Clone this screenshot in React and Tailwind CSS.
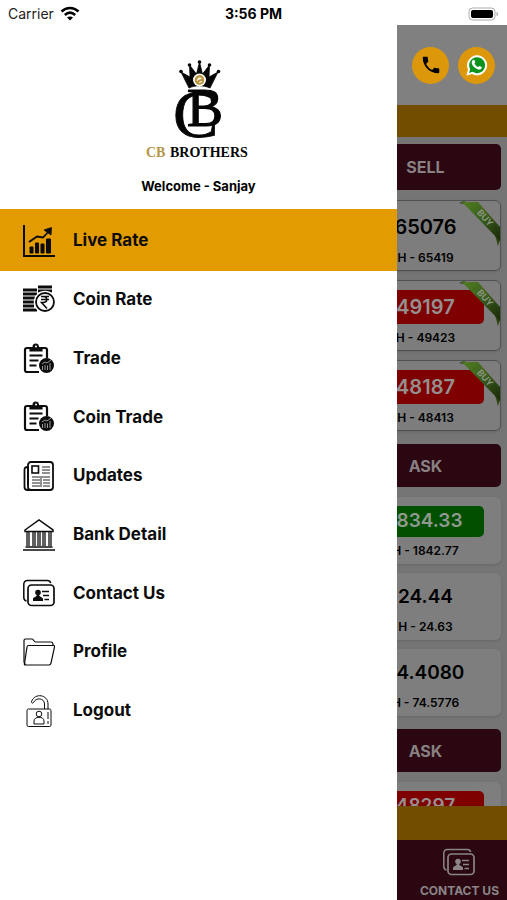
import React from "react";
import { MdPhone } from "react-icons/md";

function Icon({ children, className = "size-8" }) {
  return (
    <svg viewBox="0 0 32 32" className={className} fill="none" stroke="currentColor" strokeWidth="1.5" aria-hidden="true">
      {children}
    </svg>
  );
}

function LiveRateIcon() {
  return (
    <Icon>
      <path d="M1 0v31h31" strokeWidth="2" />
      <path d="M7 22h3v6H7zM12.500 18h3v10h-3zM18 19h3v9h-3zM23.500 14h4v14h-4z" fill="currentColor" strokeWidth="1" />
      <path d="M6 17l8-5.500 6 1L27 5" strokeWidth="1.800" />
      <path d="M21 5l7.500-2.500L28 10z" fill="currentColor" strokeWidth="0.800" />
    </Icon>
  );
}

function CoinRateIcon() {
  return (
    <Icon>
      <path d="M0 6h14M0 10h14M0 14h12M0 18h11M0 22h11M0 26h14M15 3h14M15 7h14" strokeWidth="3" />
      <circle cx="22" cy="18" r="10.500" fill="#fff" stroke="#fff" />
      <circle cx="22" cy="18" r="9" strokeWidth="1.800" />
      <path d="M18 12.500h8M18 15.500h8M18 12.500h2c5 0 5 6 0 6h-1.500l5.500 6" strokeWidth="1.600" />
    </Icon>
  );
}

function TradeIcon() {
  return (
    <Icon>
      <path d="M7 5H4a2 2 0 0 0-2 2v20a2 2 0 0 0 2 2h12M17 5h5a2 2 0 0 1 2 2v8" strokeWidth="2.200" />
      <path d="M7 8V4.500h3C10 0 15.500 0 15.500 4.500H19V8z" fill="currentColor" strokeWidth="1.200" />
      <circle cx="13" cy="3.500" r="1" fill="#fff" stroke="none" />
      <path d="M6.500 12.500h13M6.500 17.500h9M6.500 22.500h7" strokeWidth="1.800" />
      <circle cx="23.500" cy="22.500" r="7.500" fill="currentColor" stroke="none" />
      <path d="M19.500 27v-4M22 27v-5M24.500 27v-4.500M27 27v-7M19 21l3-2 2 1 4-3" stroke="#aaa" strokeWidth="0.900" />
    </Icon>
  );
}

function UpdatesIcon() {
  return (
    <Icon>
      <rect x="5" y="2" width="25" height="28" rx="3" strokeWidth="1.800" />
      <path d="M5 7c-3 0-3.500 1-3.500 3v17c0 2 1 3 3 3H9M5 7v18" strokeWidth="1.800" />
      <rect x="9" y="6" width="6.500" height="7" strokeWidth="1.600" />
      <path d="M19 7h8M19 10h8M19 13h8M9 17h18M9 20h8M9 23h8M9 26h8M20 20h7M20 23h7M20 26h7M18 18v9" strokeWidth="0.900" />
    </Icon>
  );
}

function BankIcon() {
  return (
    <Icon>
      <path d="M2 11L16 1l14 10v1.500H2z" strokeWidth="1.500" />
      <path d="M4 13v14M6 13v14M10 13v14M12 13v14M15 13v14M17 13v14M20 13v14M22 13v14M26 13v14M28 13v14" strokeWidth="1.300" />
      <path d="M2.500 28h27M0 31h32" strokeWidth="1.500" />
    </Icon>
  );
}

function ContactIcon() {
  return (
    <Icon>
      <path d="M3.500 24C1.500 23.500.8 22.500.8 20.500V7a3.500 3.500 0 0 1 3.500-3.500h20c2 0 3 1 3.400 2.700" />
      <rect x="5" y="8" width="26" height="20.500" rx="3.500" strokeWidth="1.700" />
      <circle cx="15" cy="15.500" r="2.800" fill="currentColor" stroke="none" />
      <path d="M10 24v-2c0-2 3-1.500 4-4h2c1 2.500 4 2 4 4v2z" fill="currentColor" stroke="none" />
      <path d="M19 14.500h7M20 18.500h6M21.500 22.500H26" />
    </Icon>
  );
}

function ProfileIcon() {
  return (
    <Icon>
      <path d="M2.500 29L1 26V4.500C1 3.500 1.500 3 2.500 3H9c2 0 1.500 3 3.500 3H28c1.500 0 2 1 2 3" strokeWidth="1.200" />
      <path d="M5.500 9.500h25c1 0 1.200.5 1 1.500l-3.500 16c-.3 1.300-1 2-2 2H2.500c-1 0-1.300-.5-1-1.500L4 11c.2-1 .7-1.500 1.500-1.500z" strokeWidth="1.200" />
    </Icon>
  );
}

function LogoutIcon() {
  return (
    <Icon>
      <g strokeWidth="1">
        <rect x="4" y="14" width="24" height="17.500" rx="1.500" />
        <path d="M21.500 14V9c0-6-8.500-7-11-1.500-1 1.500-2.500 0-2-1C12-2.500 25-.5 25 9v5" />
        <circle cx="16" cy="19" r="2.800" />
        <path d="M11 29v-3c0-5 10-5 10 0v3zM25 17v7M25 26v3" />
      </g>
    </Icon>
  );
}

function Logo() {
  return (
    <svg viewBox="0 0 110 102" className="h-[102px] w-[110px]" role="img" aria-label="CB Brothers">
      <g fill="#050505">
        <path d="M46 29L38 13l9 5-.5-12 7 9 3-12 3 12 7-9-.5 12 9-5-8 16c-7-3-15-3-21 0z" stroke="#050505" strokeWidth="0.800" />
        <circle cx="38" cy="12.500" r="1.800" />
        <circle cx="46.500" cy="6" r="1.800" />
        <circle cx="56.500" cy="3" r="1.800" />
        <circle cx="66.500" cy="6" r="1.800" />
        <circle cx="75.500" cy="12.500" r="1.800" />
      </g>
      <circle cx="56.500" cy="21" r="6.500" fill="#fff" />
      <g fill="none" stroke="#bb963d" strokeWidth="2">
        <circle cx="56.500" cy="21" r="3.800" />
        <path d="M53 21c2-5 5-5 7-1M54 24c2-4 4-3 6-3" />
      </g>
      <g fontFamily="'Liberation Serif', serif" fill="#050505">
        <text x="30" y="78" fontSize="68" stroke="#050505" strokeWidth="0.800">C</text>
        <text x="44" y="67" fontSize="54" stroke="#050505" strokeWidth="1.200">B</text>
        <text x="3" y="98" fontSize="14" fontWeight="700" fill="#b69545">CB</text>
        <text x="27" y="98" fontSize="14" fontWeight="700">BROTHERS</text>
      </g>
    </svg>
  );
}

function WhatsAppIcon() {
  return (
    <svg viewBox="0 0 24 24" className="size-[23px]" aria-hidden="true">
      <path d="M2 22l1.700-5.600A10 10 0 1 1 7.300 20.300z" fill="#fff" stroke="#fff" strokeWidth="1" />
      <path d="M4.200 19.800l1.200-4A8.300 8.300 0 1 1 8 18.600z" fill="#0c931c" />
      <path d="M8.200 6.500c.7-.7 1.500-.5 1.800.2l.7 1.700c.2.700-.9 1.300-.7 1.700.8 1.700 2 2.800 3.700 3.500.5.200 1-1.300 1.700-1l1.800.9c1 .7-.5 2.800-2 2.800-4 0-8.700-5-8.200-8 .1-.7.600-1.300 1.200-1.800z" fill="#fff" />
    </svg>
  );
}

function BuyRibbon() {
  return (
    <svg viewBox="0 0 42 48" className="absolute -top-px -right-px h-12 w-[42px]" role="img" aria-label="Buy">
      <defs>
        <linearGradient id="ribbon" x1="0" y1="0" x2="1" y2="1">
          <stop offset="0" stopColor="#4f7d22" />
          <stop offset="0.5" stopColor="#3a5c1c" />
          <stop offset="1" stopColor="#182708" />
        </linearGradient>
      </defs>
      <path d="M0 3L5 1l6 4zM36 35l3 11 2-6z" fill="#2c4610" />
      <path d="M3 2h16l22 25v14z" fill="url(#ribbon)" />
      <text x="26" y="21" transform="rotate(48 26 18)" textAnchor="middle" fontFamily="Inter, sans-serif" fontSize="9" fontWeight="600" fill="#8f9a86">BUY</text>
    </svg>
  );
}

const menu = [
  ["Live Rate", LiveRateIcon],
  ["Coin Rate", CoinRateIcon],
  ["Trade", TradeIcon],
  ["Coin Trade", TradeIcon],
  ["Updates", UpdatesIcon],
  ["Bank Detail", BankIcon],
  ["Contact Us", ContactIcon],
  ["Profile", ProfileIcon],
  ["Logout", LogoutIcon],
];

function StatusBar() {
  return (
    <header className="grid h-[27px] shrink-0 grid-cols-3 items-center px-2 text-sm text-[#222]">
      <div className="flex items-center gap-1.5">
        <span>Carrier</span>
        <svg viewBox="0 0 20 15" className="h-[15px] w-5" fill="none" stroke="#000" strokeWidth="2.600" aria-hidden="true">
          <path d="M1.500 5.500c5-4.700 12-4.700 17 0M4.800 9c3.200-2.800 7.200-2.800 10.400 0" />
          <path d="M10 14.500L7 11.500c1.500-1.500 4.500-1.500 6 0z" fill="#000" stroke="none" />
        </svg>
      </div>
      <time className="text-center font-bold text-black">3:56 PM</time>
      <svg viewBox="0 0 31 14" className="h-[14px] w-[31px] justify-self-end" aria-hidden="true">
        <rect x="1" y="1" width="26" height="12" rx="3.500" fill="#fff" stroke="#aaa" />
        <rect x="3" y="3" width="22" height="8" rx="2" />
        <path d="M28.500 5v4c2-.5 2-3.500 0-4" fill="#aaa" />
      </svg>
    </header>
  );
}

function Drawer() {
  return (
    <aside className="w-[397px] max-w-[78.3%] shrink-0 bg-white">
      <div className="flex h-[185px] flex-col items-center pt-8">
        <Logo />
        <p className="mt-[17px] text-[13px] leading-4 font-bold">Welcome - Sanjay</p>
      </div>
      <nav className="grid h-[528px] auto-rows-fr">
        {menu.map(([label, Glyph], i) => (
          <a
            key={label}
            href="#"
            className={`flex items-center gap-[18px] pl-[23px] text-[17px] font-bold text-[#0c0c0c] ${i === 0 ? "-mt-[3px] bg-[#e29b00] pt-0.5" : ""}`}
          >
            <Glyph />
            {label}
          </a>
        ))}
      </nav>
    </aside>
  );
}

function Heading({ children, className }) {
  return (
    <h2 className={`flex items-center justify-center rounded-[5px] bg-[#2a0711] text-base font-bold text-[#888082] ${className}`}>
      {children}
    </h2>
  );
}

const tones = {
  plain: "text-black",
  red: "bg-[#7f0000] text-[#949090]",
  green: "bg-[#005000] text-[#909890]",
};

function BuyCard({ value, high, tone }) {
  return (
    <article className="relative flex h-[71px] flex-col items-center rounded-md border border-[#515151] bg-[#7d7d7d] pt-[9px] shadow-sm">
      <strong className={`flex h-[34px] w-[116px] items-center justify-center rounded-[5px] text-xl font-semibold ${tones[tone]}`}>{value}</strong>
      <span className="mt-1.5 text-xs leading-4 font-semibold">H - {high}</span>
      <BuyRibbon />
    </article>
  );
}

function AskCard({ value, high, tone }) {
  return (
    <article className="flex h-[67px] flex-col items-center rounded-md bg-[#7e7e7e] pt-[9px] shadow">
      <strong className={`flex h-[31px] w-[116px] items-center justify-center rounded-[5px] text-[19px] font-semibold ${tones[tone]}`}>{value}</strong>
      <span className="mt-1.5 text-xs leading-4 font-semibold">H - {high}</span>
    </article>
  );
}

function Rates() {
  return (
    <main className="-mt-0.5 flex min-w-0 flex-1 flex-col overflow-hidden bg-[#757575]">
      <div className="flex h-20 shrink-0 items-center justify-end gap-[9px] bg-[#808080] pr-3">
        <button aria-label="Call" className="flex size-[37px] items-center justify-center rounded-full bg-[#dc970b]">
          <MdPhone className="size-[22px] text-black" />
        </button>
        <button aria-label="WhatsApp" className="flex size-[37px] items-center justify-center rounded-full bg-[#dc970b]">
          <WhatsAppIcon />
        </button>
      </div>
      <div className="h-8 shrink-0 bg-[#724d00]" />
      <div className="flex min-h-0 flex-1 justify-end overflow-hidden pt-[7px] pr-1.5">
        <div className="w-[151px] shrink-0">
          <Heading className="h-[46px]">SELL</Heading>
          <div className="mt-2.5 flex flex-col gap-[9px]">
            <BuyCard value="65076" high="65419" tone="plain" />
            <BuyCard value="49197" high="49423" tone="red" />
            <BuyCard value="48187" high="48413" tone="red" />
          </div>
          <Heading className="mt-[13px] h-[43px]">ASK</Heading>
          <div className="mt-2.5 flex flex-col gap-[9px]">
            <AskCard value="1834.33" high="1842.77" tone="green" />
            <AskCard value="24.44" high="24.63" tone="plain" />
            <AskCard value="74.4080" high="74.5776" tone="plain" />
          </div>
          <Heading className="mt-[13px] h-[43px]">ASK</Heading>
          <div className="mt-2.5">
            <AskCard value="48297" high="48513" tone="red" />
          </div>
        </div>
      </div>
      <div className="h-[34px] shrink-0 bg-[#724d00]" />
      <div className="flex h-[60px] shrink-0 justify-end bg-[#2a0711] pr-2">
        <a href="#" className="flex shrink-0 flex-col items-center pt-1.5 text-xs font-bold whitespace-nowrap text-[#8b8587]">
          <ContactIcon />
          <span className="mt-[5px] leading-4">CONTACT US</span>
        </a>
      </div>
    </main>
  );
}

export default function App() {
  return (
    <div className="flex h-screen min-h-[700px] flex-col overflow-hidden bg-white font-['Inter','Liberation_Sans',sans-serif] text-black">
      <StatusBar />
      <div className="flex min-h-0 flex-1">
        <Drawer />
        <Rates />
      </div>
    </div>
  );
}
